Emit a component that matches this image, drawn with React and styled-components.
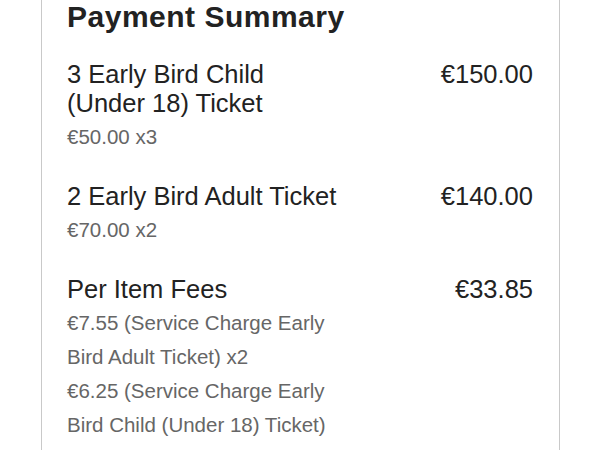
import React from 'react';
import styled, { createGlobalStyle } from 'styled-components';

const GlobalStyle = createGlobalStyle`
  html, body {
    margin: 0;
    padding: 0;
    background: #ffffff;
  }
  body {
    font-family: 'Liberation Sans', Arial, Helvetica, sans-serif;
    color: #222222;
    overflow: hidden;
  }
`;

const items = [
  {
    name: '3 Early Bird Child (Under 18) Ticket',
    price: '€150.00',
    details: ['€50.00 x3'],
  },
  {
    name: '2 Early Bird Adult Ticket',
    price: '€140.00',
    details: ['€70.00 x2'],
  },
  {
    name: 'Per Item Fees',
    price: '€33.85',
    details: [
      '€7.55 (Service Charge Early Bird Adult Ticket) x2',
      '€6.25 (Service Charge Early Bird Child (Under 18) Ticket) x3',
    ],
  },
];

export default function App() {
  return (
    <>
      <GlobalStyle />
      <Card>
        <Title>Payment Summary</Title>
        <ItemList>
          {items.map((item) => (
            <ItemRow key={item.name}>
              <ItemInfo>
                <ItemName>{item.name}</ItemName>
                <DetailList>
                  {item.details.map((d) => (
                    <Detail key={d}>{d}</Detail>
                  ))}
                </DetailList>
              </ItemInfo>
              <Price>{item.price}</Price>
            </ItemRow>
          ))}
        </ItemList>
      </Card>
    </>
  );
}

const Card = styled.section`
  box-sizing: border-box;
  width: 519px;
  margin-left: 41px;
  padding: 0 26px 40px 25px;
  border-left: 1px solid #c9c9c9;
  border-right: 1px solid #c9c9c9;
  border-bottom: 1px solid #c9c9c9;
  min-height: 600px;
  background: #ffffff;
`;

const Title = styled.h2`
  margin: 0 0 26px 0;
  font-size: 30px;
  line-height: 34px;
  font-weight: 700;
  letter-spacing: 0.5px;
  color: #222222;
`;

const ItemList = styled.div`
  display: flex;
  flex-direction: column;
  gap: 28px;
`;

const ItemRow = styled.div`
  display: flex;
  justify-content: space-between;
  align-items: flex-start;
`;

const ItemInfo = styled.div`
  width: 278px;
`;

const ItemName = styled.div`
  font-size: 25.5px;
  line-height: 29px;
  color: #222222;
`;

const DetailList = styled.div`
  margin-top: 2px;
`;

const Detail = styled.div`
  font-size: 20.5px;
  line-height: 34px;
  color: #666666;
`;

const Price = styled.div`
  font-size: 25.5px;
  line-height: 29px;
  color: #222222;
  text-align: right;
  white-space: nowrap;
`;
